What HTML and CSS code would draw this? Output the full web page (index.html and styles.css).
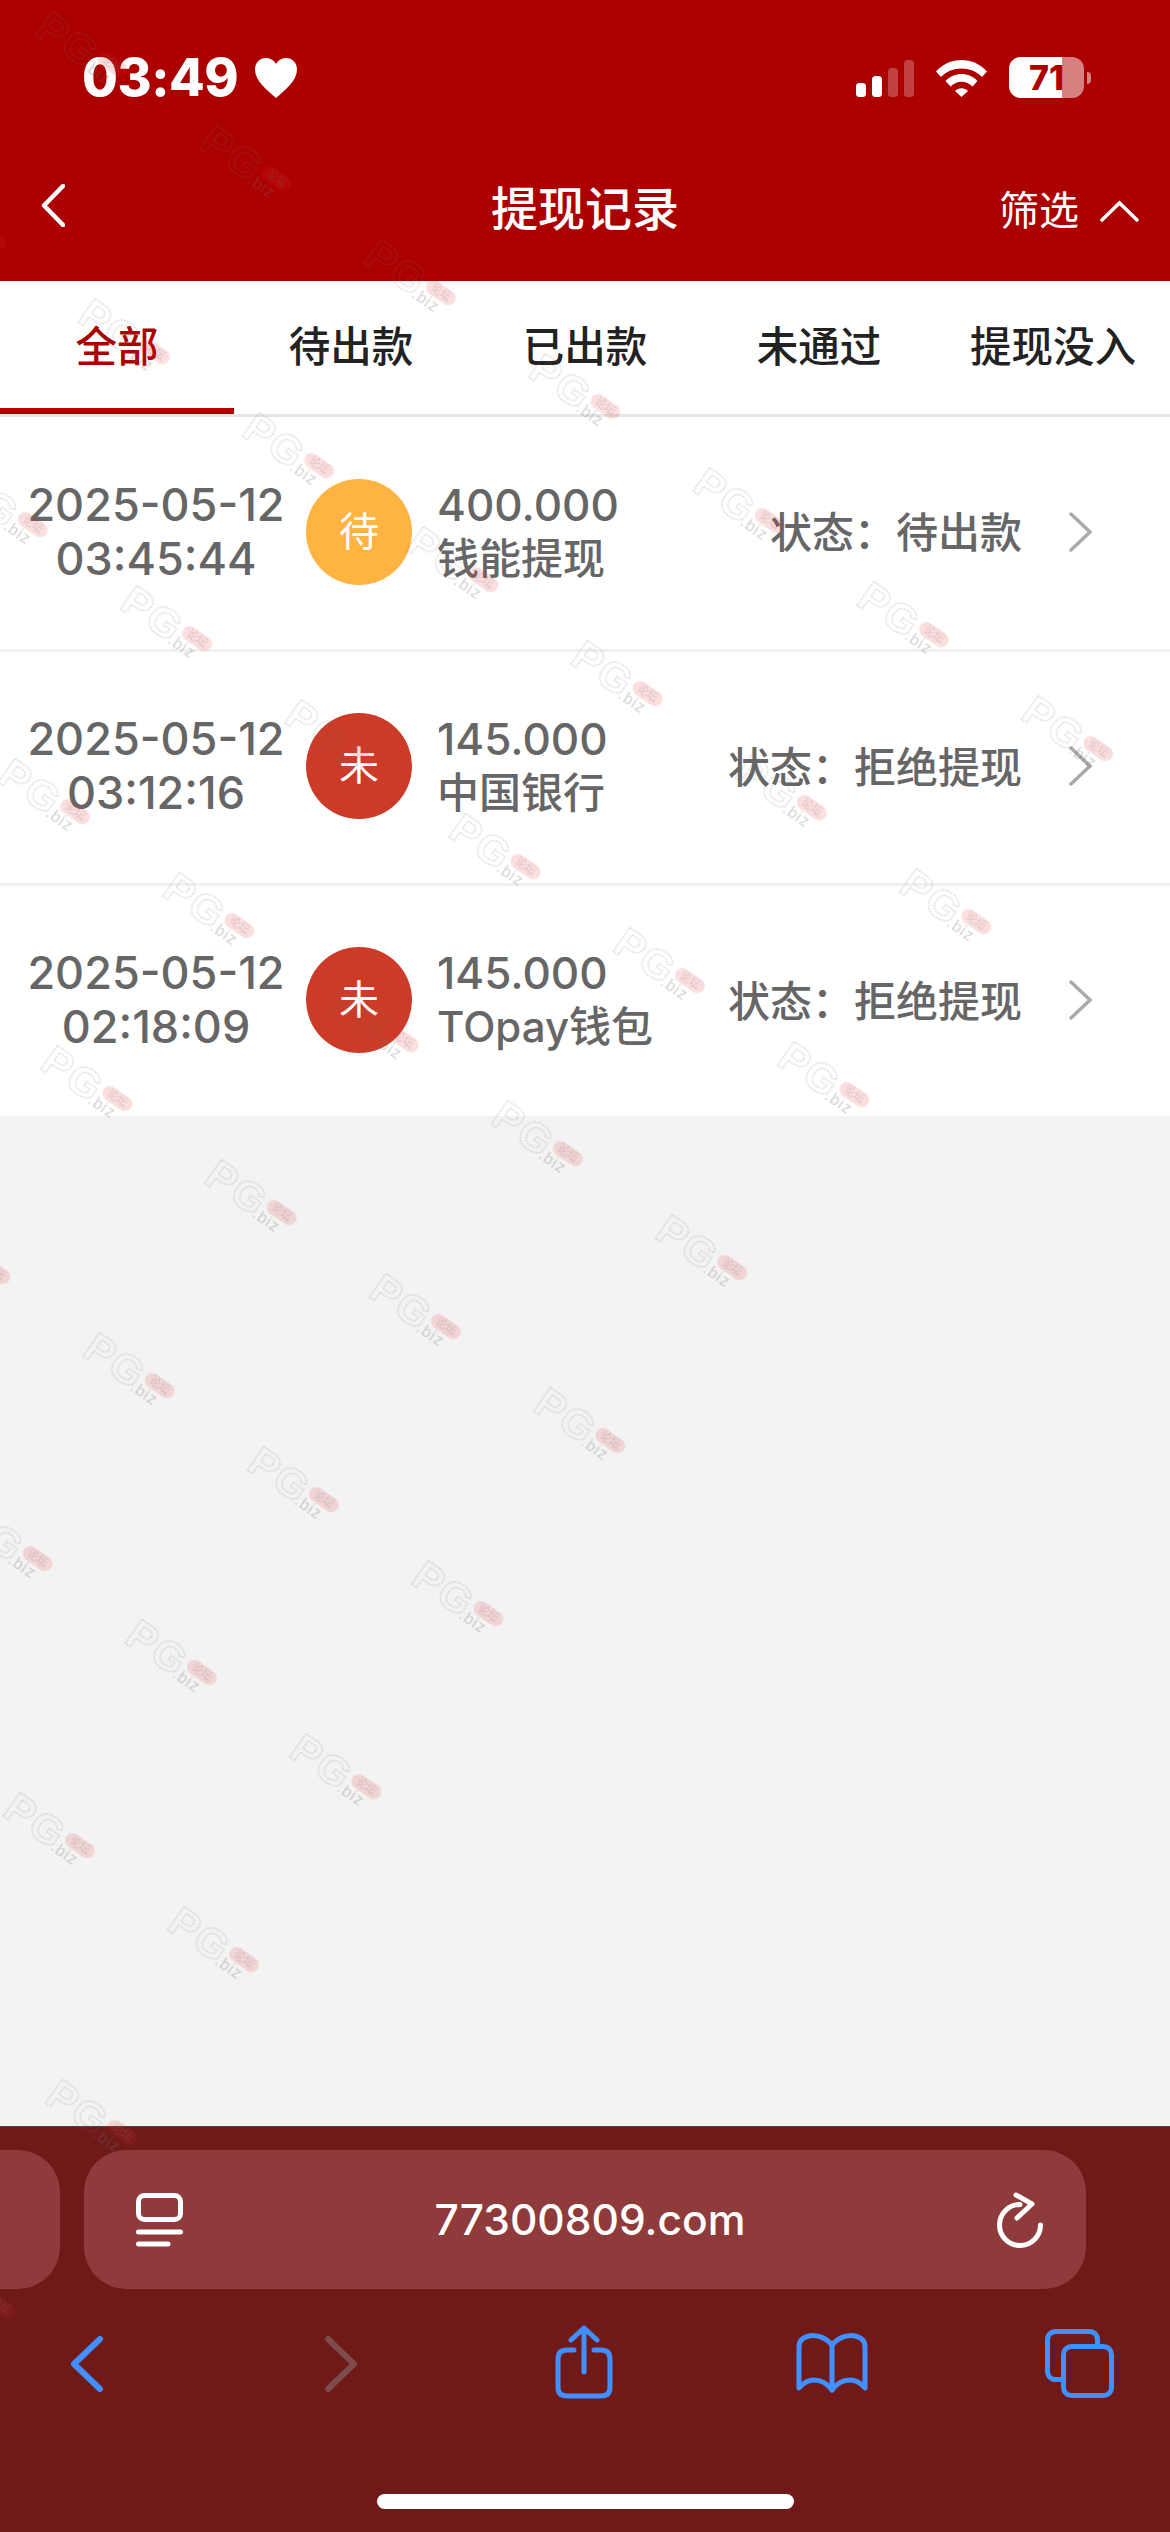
FILE: index.html
```html
<!DOCTYPE html>
<html lang="zh-CN">
<head>
    <meta charset="UTF-8">
    <meta name="viewport" content="width=device-width, initial-scale=1.0">
    <title>提现记录</title>
    <link rel="stylesheet" href="styles.css">
</head>
<body>

<div class="page">
    <header class="top">
        <div class="status-bar">
            <div class="clock">
                <span>03:49</span>
                <svg class="heart" viewBox="0 0 42 40"><path d="M21 40C12 32 0 23 0 11.500C0 4.500 5 0 11 0C15.500 0 19 2.500 21 6C23 2.500 26.500 0 31 0C37 0 42 4.500 42 11.500C42 23 30 32 21 40Z"/></svg>
            </div>
            <div class="status-icons">
                <svg class="signal" viewBox="0 0 58 37">
                    <rect x="0" y="23" width="10" height="14" rx="3.500"/>
                    <rect x="16" y="16" width="10" height="21" rx="3.500"/>
                    <rect class="off" x="32" y="8" width="10" height="29" rx="3.500"/>
                    <rect class="off" x="48" y="0" width="10" height="37" rx="3.500"/>
                </svg>
                <svg class="wifi" viewBox="0 0 51 37">
                    <path d="M0 11.500C14 -3.800 37 -3.800 51 11.500L46 17C35 5.800 16 5.800 5 17Z"/>
                    <path d="M9.500 21C18 11.800 33 11.800 41.500 21L36.500 26.500C30 20 21 20 14.500 26.500Z"/>
                    <path d="M19 31C22.500 27.400 28.500 27.400 32 31L25.500 37Z"/>
                </svg>
                <div class="battery">
                    <div class="battery-body">
                        <div class="battery-fill"></div>
                        <span class="battery-num">71</span>
                    </div>
                    <div class="battery-nub"></div>
                </div>
            </div>
        </div>
        <nav class="nav-bar">
            <svg class="nav-back" viewBox="0 0 24 43"><path d="M22 2L3 21.500L22 41"/></svg>
            <h1>提现记录</h1>
            <div class="filter">
                <span>筛选</span>
                <svg viewBox="0 0 39 22"><path d="M2 20L19.500 3L37 20"/></svg>
            </div>
        </nav>
    </header>

    <div class="tabs">
        <div class="tab active">全部</div>
        <div class="tab">待出款</div>
        <div class="tab">已出款</div>
        <div class="tab">未通过</div>
        <div class="tab">提现没入</div>
    </div>

    <main class="list">
        <div class="row">
            <div class="date">2025-05-12<br>03:45:44</div>
            <div class="badge pending">待</div>
            <div class="info"><div class="amount">400.000</div><div class="method">钱能提现</div></div>
            <div class="state">状态：待出款</div>
            <svg class="arrow" viewBox="0 0 23 40"><path d="M2 2L21 20L2 38"/></svg>
        </div>
        <div class="row">
            <div class="date">2025-05-12<br>03:12:16</div>
            <div class="badge failed">未</div>
            <div class="info"><div class="amount">145.000</div><div class="method">中国银行</div></div>
            <div class="state">状态：拒绝提现</div>
            <svg class="arrow" viewBox="0 0 23 40"><path d="M2 2L21 20L2 38"/></svg>
        </div>
        <div class="row">
            <div class="date">2025-05-12<br>02:18:09</div>
            <div class="badge failed">未</div>
            <div class="info"><div class="amount">145.000</div><div class="method">TOpay钱包</div></div>
            <div class="state">状态：拒绝提现</div>
            <svg class="arrow" viewBox="0 0 23 40"><path d="M2 2L21 20L2 38"/></svg>
        </div>
    </main>

    <footer class="toolbar">
        <div class="url-row">
            <div class="prev-tab"></div>
            <div class="url-bar">
                <svg class="reader" viewBox="0 0 47 54">
                    <rect x="2.500" y="2.500" width="42" height="24" rx="6"/>
                    <path d="M2.500 39H44.500M2.500 51H32"/>
                </svg>
                <span>77300809.com</span>
                <svg class="reload" viewBox="0 0 46 56">
                    <path d="M23 12.500A20.500 20.500 0 1 0 43.500 33"/>
                    <path d="M19 3L35 12L20 26"/>
                </svg>
            </div>
        </div>
        <div class="tool-row">
            <svg class="t-back" viewBox="0 0 33 56"><path d="M30 3L4 28L30 53"/></svg>
            <svg class="t-forward" viewBox="0 0 33 56"><path d="M3 3L29 28L3 53"/></svg>
            <svg class="t-share" viewBox="0 0 58 74">
                <path d="M19 25H12C6 25 3 28 3 34V62C3 68 6 71 12 71H46C52 71 55 68 55 62V34C55 28 52 25 46 25H39"/>
                <path d="M29 3V47M16 15L29 3L42 15"/>
            </svg>
            <svg class="t-book" viewBox="0 0 72 60">
                <path d="M36 12C30 5 24 2.500 17 2.500C9 2.500 3 7 3 13V55C8 49 13 47 18 47C25 47 31 50 36 57C41 50 47 47 54 47C59 47 64 49 69 55V13C69 7 63 2.500 55 2.500C48 2.500 42 5 36 12Z"/>
                <path d="M36 12V57"/>
            </svg>
            <svg class="t-tabs" viewBox="0 0 69 69">
                <path d="M15.500 50.500H11C6 50.500 2.500 47 2.500 42V11C2.500 6 6 2.500 11 2.500H44C49 2.500 52.500 6 52.500 11V16"/>
                <rect x="18.500" y="17.500" width="48" height="49" rx="8"/>
            </svg>
        </div>
        <div class="home-bar"></div>
    </footer>

    <!-- watermark: 7 x 10 tiles on a tilted grid, it stops at the grid edge -->
    <svg class="watermark" width="1170" height="2532">
        <defs>
            <pattern id="wm" patternUnits="userSpaceOnUse" width="200" height="212">
                <g transform="translate(20 62)">
                    <text class="wm-pg" x="-4" y="15">PG</text>
                    <rect class="wm-pill" x="62" y="-12" width="33" height="15" rx="7.500"/>
                    <text class="wm-tag" x="78.500" y="-1">论坛</text>
                    <text class="wm-biz" x="56" y="16">.biz</text>
                </g>
            </pattern>
        </defs>
        <g transform="matrix(.8215 .57 -.5755 .816 64.600 -38.400)">
            <rect width="1400" height="2120" fill="url(#wm)"/>
        </g>
    </svg>
</div>

</body>
</html>
```

FILE: styles.css
```css
html, body {
    margin: 0;
    padding: 0;
    background-color: #f3f3f3;
    font-family: Inter, "Noto Sans CJK SC", sans-serif;
}

svg {
    display: block;
    fill: none;
}

.page {
    width: 1170px;
    height: 2532px;
    display: flex;
    flex-direction: column;
    position: relative;
    overflow: hidden;
}

/* red header */
.top {
    height: 281px;
    box-sizing: border-box;
    background-color: #ac0000;
    color: #ffffff;
    padding-top: 57px;
}

.status-bar {
    height: 41px;
    display: flex;
    justify-content: space-between;
    align-items: center;
    padding: 0 79px 0 82px;
}

.clock {
    display: flex;
    align-items: center;
    gap: 17px;
    font-size: 52px;
    font-weight: 800;
    letter-spacing: -0.5px;
}

.heart {
    width: 42px;
    height: 40px;
    fill: #ffffff;
}

.status-icons {
    display: flex;
    align-items: center;
}

.signal {
    width: 58px;
    height: 37px;
    fill: #ffffff;
    margin-top: 2px;
}

.signal .off {
    opacity: 0.25;
}

.wifi {
    width: 51px;
    height: 37px;
    fill: #ffffff;
    margin: 2px 22px 0 22px;
}

.battery {
    display: flex;
    align-items: center;
    gap: 3px;
}

.battery-body {
    width: 75px;
    height: 41px;
    border-radius: 12px;
    background-color: rgba(255, 255, 255, 0.5);
    position: relative;
    overflow: hidden;
    text-align: center;
}

.battery-fill {
    position: absolute;
    left: 0;
    top: 0;
    bottom: 0;
    width: 53px;
    background-color: #ffffff;
}

.battery-num {
    position: relative;
    font-size: 34px;
    font-weight: 800;
    line-height: 41px;
    color: #ac0000;
}

.battery-nub {
    width: 4px;
    height: 12px;
    border-radius: 0 6px 6px 0;
    background-color: rgba(255, 255, 255, 0.5);
}

.nav-bar {
    height: 183px;
    box-sizing: border-box;
    padding: 39px 31px 0 41px;
    display: grid;
    grid-template-columns: 1fr auto 1fr;
    align-items: center;
}

.nav-bar h1 {
    margin: 0 10px 0 0;
    font-size: 47px;
    font-weight: 500;
    line-height: 60px;
}

.nav-back {
    width: 24px;
    height: 43px;
    margin-top: -7px;
    stroke: #ffffff;
    stroke-width: 4.500;
    stroke-linecap: round;
    stroke-linejoin: round;
}

.filter {
    justify-self: end;
    display: flex;
    align-items: center;
    gap: 21px;
    margin-top: 4px;
    font-size: 40px;
    line-height: 56px;
}

.filter svg {
    width: 39px;
    height: 22px;
    stroke: #ffffff;
    stroke-width: 3.500;
    stroke-linecap: round;
}

/* tabs */
.tabs {
    display: grid;
    grid-template-columns: repeat(5, 234px);
    height: 136px;
    box-sizing: border-box;
    background-color: #ffffff;
    border-bottom: 3px solid #e5e5e5;
}

.tab {
    font-size: 41.500px;
    font-weight: 500;
    color: #222222;
    text-align: center;
    padding-top: 33px;
    white-space: nowrap;
}

.tab.active {
    color: #ac0000;
    box-shadow: inset 0 -6px 0 #ac0000;
}

/* rows */
.list {
    background-color: #ffffff;
}

.row {
    height: 234.500px;
    box-sizing: border-box;
    padding-bottom: 2px;
    display: flex;
    align-items: center;
    border-bottom: 3px solid #f1f1f1;
    color: #666666;
}

.row:last-child {
    border-bottom: none;
    height: 230px;
}

.date {
    width: 312px;
    flex-shrink: 0;
    text-align: center;
    font-size: 45px;
    font-weight: 500;
    line-height: 54px;
}

.badge {
    width: 106px;
    height: 106px;
    flex-shrink: 0;
    margin-left: -6px;
    border-radius: 50%;
    color: #ffffff;
    font-size: 40px;
    line-height: 106px;
    text-align: center;
}

.badge.pending {
    background-color: #ffb340;
}

.badge.failed {
    background-color: #cc3b27;
}

.info {
    margin-left: 25px;
    font-weight: 500;
    line-height: 54px;
    white-space: nowrap;
}

.amount {
    font-size: 44px;
}

.method {
    font-size: 42px;
}

.state {
    margin: -4px 0 0 auto;
    font-size: 42px;
    font-weight: 500;
    white-space: nowrap;
}

.arrow {
    width: 23px;
    height: 40px;
    margin: 0 78px 0 47px;
    stroke: #aaaaaa;
    stroke-width: 3.500;
    stroke-linecap: round;
}

/* safari toolbar */
.toolbar {
    position: absolute;
    left: 0;
    right: 0;
    bottom: 0;
    height: 406px;
    background-color: #6f1919;
    border-top: 1px solid #5e3a3a;
    box-sizing: border-box;
}

.url-row {
    display: flex;
    gap: 24px;
    margin-top: 23px;
}

.prev-tab {
    width: 60px;
    height: 139px;
    background-color: #8f3b3b;
    border-radius: 0 42px 42px 0;
}

.url-bar {
    width: 1002px;
    height: 139px;
    box-sizing: border-box;
    padding: 0 43px 0 52px;
    background-color: #8f3b3b;
    border-radius: 42px;
    color: #ffffff;
    display: flex;
    justify-content: space-between;
    align-items: center;
    font-size: 42.500px;
    font-weight: 500;
}

.reader {
    width: 47px;
    height: 54px;
    stroke: #ffffff;
    stroke-width: 5;
    stroke-linecap: round;
}

.reload {
    width: 46px;
    height: 56px;
    stroke: #ffffff;
    stroke-width: 5;
    stroke-linecap: round;
    stroke-linejoin: round;
}

.tool-row {
    position: relative;
    height: 110px;
    margin-top: 36px;
}

.tool-row svg {
    position: absolute;
    stroke: #4290ff;
    stroke-width: 5;
    stroke-linecap: round;
    stroke-linejoin: round;
}

.tool-row .t-back {
    left: 70px;
    top: 11px;
    width: 33px;
    height: 56px;
    stroke-width: 6;
}

.tool-row .t-forward {
    left: 325px;
    top: 11px;
    width: 33px;
    height: 56px;
    stroke: #7d4b4b;
    stroke-width: 6;
}

.t-share {
    left: 555px;
    top: 0;
    width: 58px;
    height: 74px;
}

.t-book {
    left: 796px;
    top: 8px;
    width: 72px;
    height: 60px;
}

.t-tabs {
    left: 1045px;
    top: 4px;
    width: 69px;
    height: 69px;
}

.home-bar {
    position: absolute;
    left: 377px;
    top: 367px;
    width: 417px;
    height: 15px;
    border-radius: 8px;
    background-color: #ffffff;
}

/* watermark sits over the whole screen */
.watermark {
    position: absolute;
    left: 0;
    top: 0;
    pointer-events: none;
}

.wm-pg {
    font-family: "Liberation Sans", sans-serif;
    font-size: 42px;
    font-weight: 700;
    letter-spacing: 2px;
    fill: none;
    stroke: rgba(110, 110, 110, 0.22);
    stroke-width: 1.500;
    stroke-dasharray: 2 1;
}

.wm-pill {
    fill: rgba(225, 40, 40, 0.15);
}

.wm-tag {
    font-family: "Noto Sans CJK SC", sans-serif;
    font-size: 11px;
    text-anchor: middle;
    fill: rgba(110, 110, 110, 0.25);
}

.wm-biz {
    font-family: "Liberation Sans", sans-serif;
    font-size: 16px;
    letter-spacing: 1px;
    fill: rgba(110, 110, 110, 0.3);
}
```
